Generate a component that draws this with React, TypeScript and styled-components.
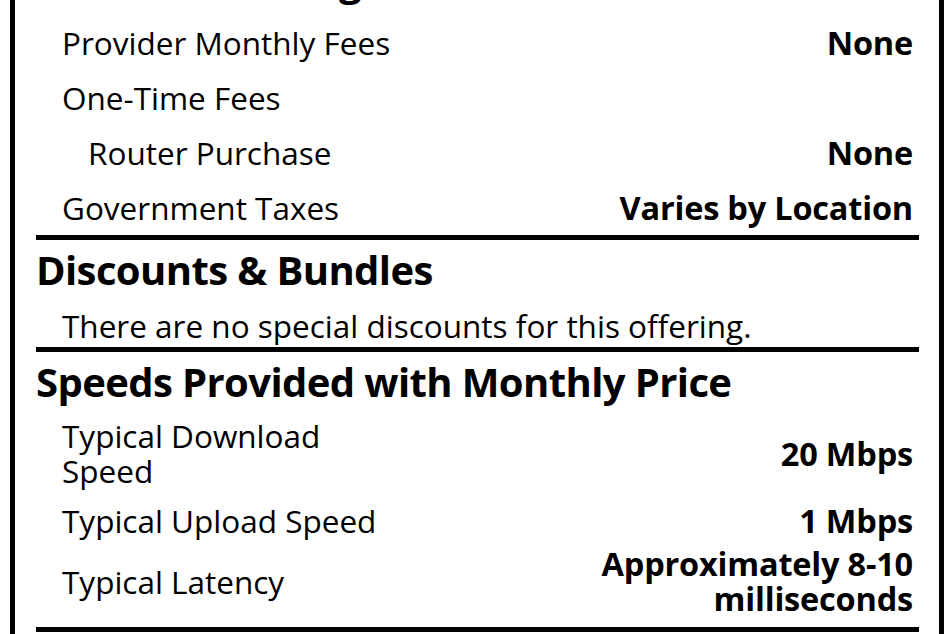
import styled, { createGlobalStyle } from 'styled-components';

const GlobalStyle = createGlobalStyle`
  html, body {
    margin: 0;
    padding: 0;
    background: #ffffff;
    overflow: hidden;
  }
  body {
    font-family: 'Open Sans', 'Noto Sans', 'Liberation Sans', sans-serif;
    color: #000000;
  }
`;

// the label is scrolled, so its first heading sits just above the top edge
const StyledLabel = styled.section`
  box-sizing: border-box;
  width: 934px;
  margin: -39px 8px 0 10px;
  padding: 0 20px 24px 21px;
  border: 5px solid #000000;
  border-top: none;
  border-bottom: none;
`;

const StyledSectionTitle = styled.h2<{ $top?: number; $bottom?: number }>`
  margin: 0;
  padding: ${(p) => p.$top ?? 10}px 0 ${(p) => p.$bottom ?? 0}px;
  font-size: 40px;
  line-height: 40px;
  font-weight: 700;
  letter-spacing: -0.6px;
  white-space: nowrap;
`;

const StyledRow = styled.div<{ $indent: number; $top: number; $bottom: number }>`
  display: flex;
  align-items: center;
  justify-content: space-between;
  padding: ${(p) => p.$top}px 6px ${(p) => p.$bottom}px ${(p) => p.$indent * 26}px;
  font-size: 31.5px;
  line-height: 35px;
`;

const StyledName = styled.span`
  flex: 0 0 40%;
`;

const StyledValue = styled.span`
  max-width: 40%;
  text-align: right;
  font-size: 32.5px;
  line-height: 35px;
  font-weight: 700;
  letter-spacing: -0.2px;
`;

const StyledNote = styled.p`
  margin: 0;
  padding: 18px 0 4px 26px;
  font-size: 31.5px;
  line-height: 35px;
`;

const StyledRule = styled.hr`
  margin: 0;
  border: none;
  height: 5px;
  background: #000000;
`;

type Item = { name: string; value?: string; indent?: number; top?: number; bottom?: number };

const fees: Item[] = [
  { name: 'Provider Monthly Fees', value: 'None' },
  { name: 'One-Time Fees' },
  { name: 'Router Purchase', value: 'None', indent: 2 },
  { name: 'Government Taxes', value: 'Varies by Location' },
];

const speeds: Item[] = [
  { name: 'Typical Download Speed', value: '20 Mbps', top: 16, bottom: 7 },
  { name: 'Typical Upload Speed', value: '1 Mbps', top: 8, bottom: 4 },
  { name: 'Typical Latency', value: 'Approximately 8-10 milliseconds', top: 4, bottom: 11 },
];

const renderRows = (items: Item[]) =>
  items.map((item) => (
    <StyledRow
      key={item.name}
      $indent={item.indent ?? 1}
      $top={item.top ?? 10}
      $bottom={item.bottom ?? 10}
    >
      <StyledName>{item.name}</StyledName>
      {item.value && <StyledValue>{item.value}</StyledValue>}
    </StyledRow>
  ));

const App = () => {
  return (
    <>
      <GlobalStyle />
      <StyledLabel>
        <StyledSectionTitle $top={0} $bottom={14}>
          Additional Charges &amp; Terms
        </StyledSectionTitle>
        {renderRows(fees)}
        <StyledRule />

        <StyledSectionTitle>Discounts &amp; Bundles</StyledSectionTitle>
        <StyledNote>There are no special discounts for this offering.</StyledNote>
        <StyledRule />

        <StyledSectionTitle>Speeds Provided with Monthly Price</StyledSectionTitle>
        {renderRows(speeds)}
        <StyledRule />
      </StyledLabel>
    </>
  );
};

export default App;
